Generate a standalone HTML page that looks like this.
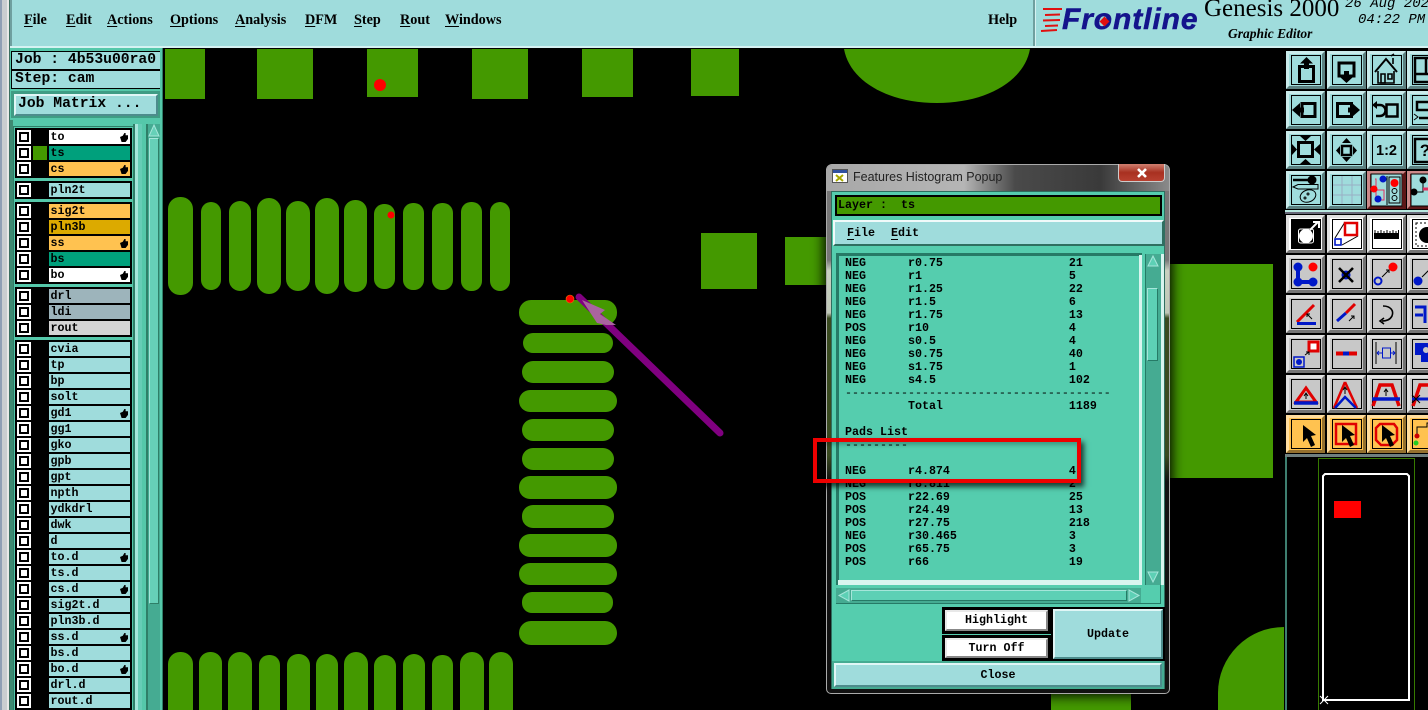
<!DOCTYPE html>
<html><head><meta charset="utf-8"><style>
html,body{margin:0;padding:0;background:#000;width:1428px;height:710px;overflow:hidden}
div,pre,b,i,u,span{position:absolute;margin:0;box-sizing:border-box}
body{font-family:"Liberation Mono",monospace;font-weight:bold;color:#000;font-size:11.67px}
.m{font:bold 14.2px "Liberation Serif",serif;top:12px;line-height:16px;white-space:pre}
.m s{text-decoration:underline;text-underline-offset:2px}
.bev{background:#9fdcdc;border:2px solid;border-color:#e0f6f6 #4d8c8c #4d8c8c #e0f6f6}
.g{background:#000;left:15px;width:117px}
.r{left:15px;width:117px;height:14px}
.r i{left:2px;top:0;width:14px;height:14px;background:#fff}
.r i:after{content:"";position:absolute;left:2px;top:2px;width:10px;height:10px;border:2px solid #000;box-sizing:border-box}
.r b{left:34px;top:0;width:81px;height:14px;background:#9fdcdc;line-height:14px;padding-left:1.5px;white-space:pre;font-size:11.67px}
.r u{right:2px;top:3px;width:8px;height:9px;background:#000;clip-path:polygon(0 45%,35% 30%,55% 0,70% 0,70% 25%,100% 25%,100% 65%,70% 100%,20% 100%)}
.t{white-space:pre;line-height:13px}
.btn{text-align:center;white-space:pre}
</style></head><body>

<!-- left edge -->
<div style="left:0;top:0;width:2px;height:710px;background:#8f9fb5"></div>
<div style="left:2px;top:0;width:5px;height:710px;background:#c9cdd0"></div>
<div style="left:7px;top:0;width:2px;height:710px;background:#e8e8e8"></div>
<div style="left:9px;top:0;width:1px;height:710px;background:#3c6f60"></div>

<!-- top bar -->
<div style="left:10px;top:0;width:1418px;height:48px;background:#9fdcdc;border-bottom:2px solid #d5f2f2"></div>
<div style="left:10px;top:0;width:2px;height:46px;background:#6f9f9f"></div>
<div style="left:1033px;top:0;width:3px;height:46px;background:#6f9f9f;border-right:1px solid #d5f2f2"></div>
<div class="m" style="left:24px"><s>F</s>ile</div>
<div class="m" style="left:66px"><s>E</s>dit</div>
<div class="m" style="left:107px"><s>A</s>ctions</div>
<div class="m" style="left:170px"><s>O</s>ptions</div>
<div class="m" style="left:235px"><s>A</s>nalysis</div>
<div class="m" style="left:305px"><s>D</s>FM</div>
<div class="m" style="left:354px"><s>S</s>tep</div>
<div class="m" style="left:400px"><s>R</s>out</div>
<div class="m" style="left:445px"><s>W</s>indows</div>
<div class="m" style="left:988px">Help</div>

<!-- logo -->
<svg style="position:absolute;left:1040px;top:6px" width="24" height="26"><g stroke="#e01010" stroke-width="2"><path d="M3 3L22 3M5 9L20 8.500M3 14.500L20 14M5 20L18 19.500M1 25L17 24"/></g></svg>
<div style="left:1062px;top:2px;font:italic bold 30px/36px 'Liberation Sans',sans-serif;color:#14148c;white-space:pre;letter-spacing:.9px;-webkit-text-stroke:.5px #14148c">Frontline</div>
<div style="left:1100.500px;top:18px;width:7px;height:7px;background:#e01010;transform:rotate(45deg)"></div>
<div style="left:1204px;top:-6px;font:25px/30px 'Liberation Serif',serif;white-space:pre">Genesis 2000</div>
<div style="left:1228px;top:26px;font:italic bold 13.5px/16px 'Liberation Serif',serif;white-space:pre">Graphic Editor</div>
<div style="left:1345px;top:-3px;font:italic 14px/14px 'Liberation Mono',monospace;white-space:pre">26 Aug 2021</div>
<div style="left:1358px;top:13px;font:italic 14px/14px 'Liberation Mono',monospace;white-space:pre">04:22 PM</div>

<!-- left panel -->
<div style="left:10px;top:48px;width:153px;height:662px;background:#55c8aa"></div>
<div style="left:10px;top:120px;width:3px;height:590px;background:#3f8a72"></div>
<div style="left:11px;top:51px;width:150px;height:20px;background:#9fdcdc;border:1px solid #000;border-width:1px 1px 2px;font-size:14.7px;line-height:17px;padding-left:3px;white-space:pre">Job : 4b53u00ra0</div>
<div style="left:11px;top:70px;width:150px;height:19px;background:#9fdcdc;border:1px solid #000;font-size:14.7px;line-height:17px;padding-left:3px;white-space:pre">Step: cam</div>
<div style="left:11px;top:91px;width:150px;height:27px;background:#3f9c84"></div>
<div class="bev" style="left:14px;top:94px;width:144px;height:22px;border-width:2px;font-size:14.7px;line-height:17px;padding-left:2px;white-space:pre">Job Matrix ...</div>

<!-- scroll strips -->
<div style="left:133px;top:124px;width:2px;height:586px;background:#2f7f68"></div>
<div style="left:135px;top:124px;width:3px;height:586px;background:#a5e6da"></div>
<div style="left:138px;top:124px;width:4px;height:586px;background:#66cdb6"></div>
<div style="left:146px;top:124px;width:2px;height:586px;background:#2f7f68"></div>
<div style="left:148px;top:124px;width:12px;height:586px;background:#45ab92"></div>
<div style="left:149px;top:138px;width:10px;height:466px;background:#66d0b8;border:1px solid;border-color:#a5e6da #2f7f68 #2f7f68 #a5e6da"></div>
<svg style="position:absolute;left:148px;top:124px" width="12" height="14"><path d="M6 1L11 12H1Z" fill="#66d0b8" stroke="#a5e6da"/></svg>
<div style="left:160px;top:48px;width:3px;height:662px;background:#55c8aa;border-right:1px solid #2f7f68"></div>

<div style="left:13px;top:126px;width:121px;height:584px;background:#55c8aa;border:1px solid #2f7f68;border-bottom:0"></div>
<div class="g" style="top:128px;height:50px"></div>
<div class="g" style="top:181px;height:18px"></div>
<div class="g" style="top:202px;height:82px"></div>
<div class="g" style="top:287px;height:50px"></div>
<div class="g" style="top:340px;height:370px"></div>
<div style="left:33px;top:146px;width:14px;height:14px;background:#449900;z-index:2"></div>

<div class="r" style="top:130px"><i></i><b style="background:#fff">to<u></u></b></div>
<div class="r" style="top:146px"><i></i><b style="background:#00a07c">ts</b></div>
<div class="r" style="top:162px"><i></i><b style="background:#ffc250">cs<u></u></b></div>
<div class="r" style="top:183px"><i></i><b>pln2t</b></div>
<div class="r" style="top:204px"><i></i><b style="background:#ffc250">sig2t</b></div>
<div class="r" style="top:220px"><i></i><b style="background:#dcaa00">pln3b</b></div>
<div class="r" style="top:236px"><i></i><b style="background:#ffc250">ss<u></u></b></div>
<div class="r" style="top:252px"><i></i><b style="background:#00a07c">bs</b></div>
<div class="r" style="top:268px"><i></i><b style="background:#fff">bo<u></u></b></div>
<div class="r" style="top:289px"><i></i><b style="background:#9db4bb">drl</b></div>
<div class="r" style="top:305px"><i></i><b style="background:#9db4bb">ldi</b></div>
<div class="r" style="top:321px"><i></i><b style="background:#d4d4d4">rout</b></div>
<div class="r" style="top:342px"><i></i><b>cvia</b></div>
<div class="r" style="top:358px"><i></i><b>tp</b></div>
<div class="r" style="top:374px"><i></i><b>bp</b></div>
<div class="r" style="top:390px"><i></i><b>solt</b></div>
<div class="r" style="top:406px"><i></i><b>gd1<u></u></b></div>
<div class="r" style="top:422px"><i></i><b>gg1</b></div>
<div class="r" style="top:438px"><i></i><b>gko</b></div>
<div class="r" style="top:454px"><i></i><b>gpb</b></div>
<div class="r" style="top:470px"><i></i><b>gpt</b></div>
<div class="r" style="top:486px"><i></i><b>npth</b></div>
<div class="r" style="top:502px"><i></i><b>ydkdrl</b></div>
<div class="r" style="top:518px"><i></i><b>dwk</b></div>
<div class="r" style="top:534px"><i></i><b>d</b></div>
<div class="r" style="top:550px"><i></i><b>to.d<u></u></b></div>
<div class="r" style="top:566px"><i></i><b>ts.d</b></div>
<div class="r" style="top:582px"><i></i><b>cs.d<u></u></b></div>
<div class="r" style="top:598px"><i></i><b>sig2t.d</b></div>
<div class="r" style="top:614px"><i></i><b>pln3b.d</b></div>
<div class="r" style="top:630px"><i></i><b>ss.d<u></u></b></div>
<div class="r" style="top:646px"><i></i><b>bs.d</b></div>
<div class="r" style="top:662px"><i></i><b>bo.d<u></u></b></div>
<div class="r" style="top:678px"><i></i><b>drl.d</b></div>
<div class="r" style="top:694px"><i></i><b>rout.d</b></div>

<!-- canvas -->
<svg style="position:absolute;left:0;top:0" width="1428" height="710">
<g fill="#449900">
<rect x="165" y="49" width="40" height="50"/><rect x="257" y="49" width="56" height="50"/><rect x="367" y="49" width="51" height="48"/><rect x="472" y="49" width="56" height="50"/><rect x="582" y="49" width="51" height="48"/><rect x="691" y="49" width="48" height="47"/>
<path d="M844 49H1030C1024 82 985 103 937 103C889 103 850 82 844 49Z"/>
<rect x="168" y="197" width="25" height="98" rx="12"/><rect x="201" y="202" width="20" height="88" rx="10"/><rect x="229" y="201" width="22" height="90" rx="11"/><rect x="257" y="198" width="24" height="96" rx="12"/><rect x="286" y="201" width="24" height="90" rx="12"/><rect x="315" y="198" width="24" height="96" rx="12"/><rect x="344" y="200" width="23" height="92" rx="11"/><rect x="374" y="204" width="21" height="85" rx="10"/><rect x="403" y="203" width="21" height="87" rx="10"/><rect x="432" y="203" width="21" height="87" rx="10"/><rect x="461" y="202" width="21" height="89" rx="10"/><rect x="490" y="202" width="20" height="89" rx="10"/>
<rect x="168" y="652" width="25" height="90" rx="12"/><rect x="199" y="652" width="23" height="90" rx="11"/><rect x="228" y="652" width="24" height="90" rx="12"/><rect x="259" y="655" width="21" height="90" rx="10"/><rect x="287" y="654" width="23" height="90" rx="11"/><rect x="316" y="654" width="22" height="90" rx="11"/><rect x="344" y="652" width="24" height="90" rx="12"/><rect x="374" y="655" width="22" height="90" rx="11"/><rect x="403" y="654" width="22" height="90" rx="11"/><rect x="432" y="655" width="21" height="90" rx="10"/><rect x="460" y="652" width="24" height="90" rx="12"/><rect x="489" y="652" width="24" height="90" rx="12"/>
<rect x="519" y="300" width="98" height="25" rx="12"/><rect x="523" y="333" width="90" height="20" rx="10"/><rect x="522" y="361" width="92" height="22" rx="11"/><rect x="519" y="390" width="98" height="22" rx="11"/><rect x="522" y="419" width="92" height="22" rx="11"/><rect x="522" y="448" width="92" height="22" rx="11"/><rect x="519" y="476" width="98" height="23" rx="11"/><rect x="522" y="505" width="92" height="23" rx="11"/><rect x="519" y="534" width="98" height="23" rx="11"/><rect x="519" y="563" width="98" height="22" rx="11"/><rect x="522" y="592" width="91" height="21" rx="10"/><rect x="519" y="621" width="98" height="24" rx="12"/>
<rect x="701" y="233" width="56" height="56"/><rect x="785" y="237" width="60" height="48"/>
<rect x="1150" y="264" width="123" height="214"/><rect x="1051" y="680" width="80" height="30"/>
<path d="M1284 627A66 66 0 0 0 1218 693V710H1284Z"/>
</g>
<circle cx="380" cy="85" r="6" fill="#f00"/><circle cx="391" cy="215" r="3.500" fill="#f00"/>
<path d="M579 297L720 433" stroke="#800080" stroke-width="7" stroke-linecap="round"/>
<path d="M582 300L605 310L600 314L616 325H606L597 323Z" fill="#a9649f"/>
<circle cx="570" cy="299" r="4" fill="#f00" stroke="#e08000" stroke-width=".6"/>
</svg>

<!-- right toolbar -->
<svg style="position:absolute;left:1283px;top:47px" width="145" height="663" viewBox="1283 47 145 663">
<defs>
<g id="b"><rect width="39" height="38"/><path d="M0 0H39L36 3H3V35L0 38Z" fill="#fff" fill-opacity=".45"/><path d="M39 0V38H0L3 35H36V3Z" fill="#000" fill-opacity=".42"/></g>
<path id="f" d="M5.500 4.500h29v29h-29z" fill="none" stroke="#000"/>
<path id="cur" d="M0 0V17L4 13L8 22L12 20L8 11L13 10Z" fill="#000"/>
</defs>
<rect x="1283" y="48" width="145" height="409" fill="#000"/>
<rect x="1285" y="210" width="143" height="2" fill="#b8e8e0"/><rect x="1285" y="212" width="143" height="2" fill="#667"/>
<rect x="1285" y="454" width="143" height="3" fill="#6f7f7f"/>

<!-- row 1 -->
<g fill="#9fdcdc">
<use href="#b" x="1286" y="51"/><use href="#b" x="1327" y="51"/><use href="#b" x="1367" y="51"/><use href="#b" x="1407" y="51"/>
<use href="#b" x="1286" y="91"/><use href="#b" x="1327" y="91"/><use href="#b" x="1367" y="91"/><use href="#b" x="1407" y="91"/>
<use href="#b" x="1286" y="131"/><use href="#b" x="1327" y="131"/><use href="#b" x="1367" y="131"/><use href="#b" x="1407" y="131"/>
<use href="#b" x="1286" y="171"/><use href="#b" x="1327" y="171"/>
</g>
<g fill="#a02828"><use href="#b" x="1367" y="171"/><use href="#b" x="1407" y="171"/></g>
<g fill="#c8c8c8">
<use href="#b" x="1286" y="215"/><use href="#b" x="1327" y="215"/><use href="#b" x="1367" y="215"/><use href="#b" x="1407" y="215"/>
<use href="#b" x="1286" y="255"/><use href="#b" x="1327" y="255"/><use href="#b" x="1367" y="255"/><use href="#b" x="1407" y="255"/>
<use href="#b" x="1286" y="295"/><use href="#b" x="1327" y="295"/><use href="#b" x="1367" y="295"/><use href="#b" x="1407" y="295"/>
<use href="#b" x="1286" y="335"/><use href="#b" x="1327" y="335"/><use href="#b" x="1367" y="335"/><use href="#b" x="1407" y="335"/>
<use href="#b" x="1286" y="375"/><use href="#b" x="1327" y="375"/><use href="#b" x="1367" y="375"/><use href="#b" x="1407" y="375"/>
</g>
<g fill="#ffc250"><use href="#b" x="1286" y="415"/><use href="#b" x="1327" y="415"/><use href="#b" x="1367" y="415"/><use href="#b" x="1407" y="415"/></g>

<!-- frames -->
<g>
<use href="#f" x="1286" y="51"/><use href="#f" x="1327" y="51"/><use href="#f" x="1367" y="51"/><use href="#f" x="1407" y="51"/>
<use href="#f" x="1286" y="91"/><use href="#f" x="1327" y="91"/><use href="#f" x="1367" y="91"/><use href="#f" x="1407" y="91"/>
<use href="#f" x="1286" y="131"/><use href="#f" x="1327" y="131"/><use href="#f" x="1367" y="131"/><use href="#f" x="1407" y="131"/>
<use href="#f" x="1286" y="171"/><use href="#f" x="1327" y="171"/>
<use href="#f" x="1286" y="255"/><use href="#f" x="1327" y="255"/><use href="#f" x="1367" y="255"/><use href="#f" x="1407" y="255"/>
<use href="#f" x="1286" y="295"/><use href="#f" x="1327" y="295"/><use href="#f" x="1367" y="295"/><use href="#f" x="1407" y="295"/>
<use href="#f" x="1286" y="335"/><use href="#f" x="1327" y="335"/><use href="#f" x="1367" y="335"/><use href="#f" x="1407" y="335"/>
<use href="#f" x="1286" y="375"/><use href="#f" x="1327" y="375"/><use href="#f" x="1367" y="375"/><use href="#f" x="1407" y="375"/>
<use href="#f" x="1286" y="415"/><use href="#f" x="1327" y="415"/><use href="#f" x="1367" y="415"/><use href="#f" x="1407" y="415"/>
</g>

<!-- r1 icons -->
<g transform="translate(1286,51)" fill="none" stroke="#000" stroke-width="3"><path d="M13.500 15.500h14v15h-14z"/><path d="M20.500 6L14 12.500H18V18H23V12.500H27Z" fill="#000" stroke="none"/></g>
<g transform="translate(1327,51)" fill="none" stroke="#000" stroke-width="3"><path d="M12 12h15v13H12z"/><path d="M19.500 32L13 26H17V20H22V26H26Z" fill="#000" stroke="none"/></g>
<g transform="translate(1367,51)" fill="none" stroke="#000" stroke-width="1.600"><path d="M8 21L19 8L30 21" stroke-width="2"/><path d="M11 20V32H27V20"/><path d="M14 23h4v9h-4zM21 23h4v5h-4z"/><path d="M26 13V7M24 5l3-2"/></g>
<g transform="translate(1407,51)" fill="none" stroke="#000" stroke-width="2.500"><path d="M8 7h24v24H8zM8 23h24M19 7v16"/></g>
<!-- r2 -->
<g transform="translate(1286,91)" fill="none" stroke="#000" stroke-width="3"><path d="M16 12.500h13v13H16z"/><path d="M6 19L14 12V26Z" fill="#000" stroke="none"/><path d="M12 16.500h6v5h-6z" fill="#000" stroke="none"/></g>
<g transform="translate(1327,91)" fill="none" stroke="#000" stroke-width="3"><path d="M10.500 12.500h14v13h-14z"/><path d="M33 19L25 12V26Z" fill="#000" stroke="none"/><path d="M21 16.500h6v5h-6z" fill="#000" stroke="none"/></g>
<g transform="translate(1367,91)" fill="none" stroke="#000" stroke-width="2.500"><path d="M19.500 13.500h11v12h-11z"/><path d="M9 14h4a5 5 0 0 1 0 11h-4"/><path d="M5 14L10 10V18Z" fill="#000" stroke="none"/></g>
<g transform="translate(1407,91)" fill="none" stroke="#000" stroke-width="2.500"><path d="M32 11H10V19H28V27H12"/><path d="M7 23l4 3-4 3" stroke-width="1"/></g>
<!-- r3 -->
<g transform="translate(1286,131)" fill="none" stroke="#000" stroke-width="3"><path d="M12.500 11.500h14v14h-14z"/><g fill="#000" stroke="none"><path d="M14 5H25L19.500 10ZM14 33H25L19.500 28ZM6 13V24L11 18.500ZM34 13V24L28 18.500Z"/></g></g>
<g transform="translate(1327,131)" fill="none" stroke="#000" stroke-width="2.500"><path d="M15 15h9v9h-9z"/><g fill="#000" stroke="none"><path d="M19.500 7L15 12H24ZM19.500 31L15 26H24ZM9 19.500L13 15V24ZM30 19.500L26 15V24Z"/></g></g>
<text x="1386.500" y="155" font-family="Liberation Sans,sans-serif" font-weight="bold" font-size="14.500" text-anchor="middle">1:2</text>
<g transform="translate(1407,131)" fill="none" stroke="#000" stroke-width="2.500"><path d="M8 8h24v23H8z"/></g>
<text x="1425" y="156" font-family="Liberation Sans,sans-serif" font-weight="bold" font-size="17" text-anchor="middle">?</text>
<!-- r4 -->
<g transform="translate(1286,171)" fill="none" stroke="#000"><path d="M7 9H24" stroke-width="2.500"/><circle cx="26" cy="9" r="4" fill="#000"/><path d="M7 16L12 13.500H32V18H12Z" fill="#9fdcdc" stroke-width="1"/><ellipse cx="22" cy="25" rx="8" ry="6" transform="rotate(-20 22 25)" fill="#9fdcdc"/><circle cx="19" cy="27" r="1"/><circle cx="22" cy="23" r="1"/></g>
<g transform="translate(1327,171)" stroke="#9aaec4" stroke-width="1" fill="none"><path d="M15 5v28M25 5v28M6 14h28M6 24h28"/></g>
<g transform="translate(1367,171)"><rect x="4" y="3" width="31" height="32" fill="#9fdcdc" stroke="#000"/><path d="M20 5V34" stroke="#000"/><path d="M8 8H9V31M8 19H17V29H12" fill="none" stroke="#e03060" stroke-width="1"/><circle cx="16" cy="8" r="3.500" fill="#0018c8"/><circle cx="7" cy="18" r="3.500" fill="#f00"/><circle cx="11" cy="28" r="3.500" fill="#0018c8"/><rect x="22" y="6" width="11" height="26" fill="none" stroke="#000"/><circle cx="27.500" cy="12" r="4" fill="#f00"/><circle cx="27.500" cy="20" r="2.500" fill="none" stroke="#000"/><circle cx="27.500" cy="27" r="2.500" fill="none" stroke="#000"/></g>
<g transform="translate(1407,171)"><rect x="4" y="3" width="31" height="32" fill="#9fdcdc" stroke="#000"/><circle cx="16" cy="9" r="3.500" fill="#000"/><circle cx="7" cy="21" r="3.500" fill="#000"/><path d="M16 9V21H7" fill="none" stroke="#000"/><path d="M16 18H22" stroke="#e03060" stroke-width="3"/></g>

<!-- white row -->
<g transform="translate(1286,215)"><rect x="3" y="3" width="33" height="32" fill="#fff"/><rect x="5" y="4" width="30" height="30" fill="#000"/><rect x="12.500" y="14" width="15" height="14" rx="2" fill="none" stroke="#fff"/><circle cx="20" cy="21" r="7" fill="#fff"/><path d="M24 15L32 7M27 7H33V13" fill="none" stroke="#fff" stroke-width="2"/></g>
<g transform="translate(1327,215)"><rect x="3" y="3" width="33" height="32" fill="#fff"/><rect x="5.500" y="4.500" width="29" height="29" fill="none" stroke="#000"/><path d="M8 23L18 7M15 30L31 21" stroke="#000" fill="none"/><rect x="18" y="8" width="12" height="12" fill="#fff" stroke="#e00000" stroke-width="2.500"/><rect x="8" y="24" width="6" height="6" fill="#fff" stroke="#0018c8" stroke-width="1.600"/></g>
<g transform="translate(1367,215)"><rect x="3" y="3" width="33" height="32" fill="#fff"/><rect x="5.500" y="4.500" width="29" height="29" fill="none" stroke="#000"/><rect x="7" y="18" width="25" height="6" fill="#000"/><path d="M8 15v4M11 16v3M14 15v4M17 16v3M20 15v4M23 16v3M26 15v4M29 16v3M31.500 15v4" stroke="#000"/></g>
<g transform="translate(1407,215)"><rect x="3" y="3" width="33" height="32" fill="#fff"/><rect x="5.500" y="4.500" width="29" height="29" fill="none" stroke="#000"/><rect x="9" y="8" width="24" height="23" fill="none" stroke="#000" stroke-dasharray="2 2"/><circle cx="20" cy="20" r="8" fill="#000"/></g>
<!-- grey 2 -->
<g transform="translate(1286,255)"><path d="M12 12V27H27" fill="none" stroke="#0018c8" stroke-width="4"/><circle cx="12" cy="12" r="4.500" fill="#0018c8"/><circle cx="12" cy="27" r="4.500" fill="#0018c8"/><circle cx="27" cy="27" r="4.500" fill="#0018c8"/><circle cx="27" cy="12" r="4.500" fill="#f00"/></g>
<g transform="translate(1327,255)"><circle cx="19" cy="20" r="4.500" fill="#0018c8"/><path d="M12 13L26 27M26 13L12 27" stroke="#000" stroke-width="2.500"/></g>
<g transform="translate(1367,255)"><circle cx="11" cy="26" r="3.500" fill="none" stroke="#0018c8" stroke-width="2"/><circle cx="26" cy="12" r="4.500" fill="#f00"/><path d="M15 22L22 15M19 15h3v3" fill="none" stroke="#000"/></g>
<g transform="translate(1407,255)"><circle cx="11" cy="26" r="4.500" fill="#0018c8"/><path d="M15 22L24 13" stroke="#000"/></g>
<!-- grey 3 -->
<g transform="translate(1286,295)"><path d="M11 27L28 10" stroke="#e00000" stroke-width="3"/><path d="M11 28.500H30" stroke="#0018c8" stroke-width="3"/><path d="M26 24L21 19M21 22V19H24" fill="none" stroke="#000"/></g>
<g transform="translate(1327,295)"><path d="M10 26L19 18" stroke="#0018c8" stroke-width="3"/><path d="M19 18L28 9" stroke="#e00000" stroke-width="3"/><path d="M22 26L27 21M24 21H27V24" fill="none" stroke="#000"/></g>
<g transform="translate(1367,295)" fill="none" stroke="#000" stroke-width="1.600"><path d="M16 11C24 11 27 16 25 21C23 25 19 26 15 26"/><path d="M17 23L13 26L17 29"/></g>
<g transform="translate(1407,295)" fill="none"><path d="M8 12H18V28M8 20H16" stroke="#0018c8" stroke-width="3"/><path d="M22 8V30" stroke="#000"/></g>
<!-- grey 4 -->
<g transform="translate(1286,335)"><rect x="23" y="7" width="9" height="9" fill="#fff" stroke="#e00000" stroke-width="3"/><rect x="8" y="22" width="10" height="10" fill="none" stroke="#0018c8" stroke-width="1.500"/><circle cx="13" cy="27" r="3" fill="#0018c8"/><path d="M19 20L23 17M20 17H23V20" fill="none" stroke="#000"/></g>
<g transform="translate(1327,335)"><path d="M9 18.500H30" stroke="#e00000" stroke-width="4"/><path d="M16 18.500H22" stroke="#0018c8" stroke-width="4"/></g>
<g transform="translate(1367,335)" fill="none"><path d="M9 7V29M29 7V29" stroke="#000"/><rect x="15.500" y="13" width="8" height="10" stroke="#0018c8"/><path d="M10 18H15M24 18H28M10 18l2-2M10 18l2 2M28 18l-2-2M28 18l-2 2" stroke="#0018c8"/></g>
<g transform="translate(1407,335)"><path d="M8 8H22V16H24V27H14V20H8Z" fill="#0018c8"/><circle cx="19" cy="15" r="3" fill="#c8c8c8"/></g>
<!-- grey 5 -->
<g transform="translate(1286,375)" fill="none"><path d="M20 13L10 27H30Z" stroke="#e00000" stroke-width="3"/><path d="M8 28H32" stroke="#0018c8" stroke-width="3.500"/><path d="M20 24V19M18 21L20 18L22 21" stroke="#000"/></g>
<g transform="translate(1327,375)" fill="none"><path d="M18 7L7 33M18 7L30 33" stroke="#e00000" stroke-width="2.500"/><path d="M8 33L18 22L29 33" stroke="#0018c8" stroke-width="2.500"/><path d="M18 19V13M16 15L18 12L20 15" stroke="#000"/></g>
<g transform="translate(1367,375)" fill="none"><path d="M6 31L13 10H25L32 31" stroke="#e00000" stroke-width="3.500"/><path d="M5 24H33" stroke="#0018c8" stroke-width="3.500"/><path d="M19 21V15M17 17L19 14L21 17" stroke="#000"/></g>
<g transform="translate(1407,375)" fill="none"><path d="M6 31L13 10H24" stroke="#e00000" stroke-width="3.500"/><path d="M5 24H33" stroke="#0018c8" stroke-width="3"/><path d="M2 20L10 28M10 20L2 28" stroke="#000" transform="translate(3,0)"/></g>
<!-- orange -->
<use href="#cur" transform="translate(1303,425)"/>
<g transform="translate(1327,415)"><rect x="9" y="9" width="20" height="20" fill="none" stroke="#e00000" stroke-width="2.500"/><use href="#cur" transform="translate(15,10)"/></g>
<g transform="translate(1367,415)"><path d="M13 9H27L30 13V25L25 30H14L9 25V13Z" fill="none" stroke="#e00000" stroke-width="2.500"/><use href="#cur" transform="translate(15,10)"/></g>
<g transform="translate(1407,415)"><path d="M10 21V12H20V8H30" fill="none" stroke="#000"/><circle cx="10" cy="21" r="2.500" fill="#c00"/><circle cx="9" cy="28" r="2.500" fill="#2c2"/></g>

<!-- minimap -->
<rect x="1285" y="457" width="2" height="253" fill="#3e7f70"/>
<path d="M1318.500 710V458.500H1414.500V710" fill="none" stroke="#449900" stroke-opacity=".8"/>
<path d="M1323 700V476L1325 474H1407L1409 476V700Z" fill="none" stroke="#fff" stroke-width="2"/>
<rect x="1334" y="501" width="27" height="17" fill="#f00"/>
<path d="M1320 696L1328 704M1328 696L1320 704" stroke="#fff"/>
</svg>

<!-- popup -->
<div style="left:826px;top:164px;width:344px;height:530px;border-radius:6px 6px 5px 5px;background:linear-gradient(180deg,#777 0,#777 18%,#c8d0c0 20%,#c0c8b8 28%,#3a4a20 29%,#3a4a20 55%,#111 60%,#111 100%);border:1px solid #aaa;box-shadow:0 0 12px 2px #000"></div>
<div style="left:827px;top:165px;width:342px;height:26px;border-radius:5px 5px 0 0;background:linear-gradient(90deg,#a8a8a8 0,#b5b5b5 40%,#4a4a4a 55%,#3a3a3a 80%,#8a8a8a 100%)"></div>
<svg style="position:absolute;left:832px;top:169px" width="17" height="15"><rect x=".5" y=".5" width="15" height="13" fill="#fff" stroke="#555"/><rect x="1" y="1" width="14" height="3" fill="#3050a0"/><path d="M4 6L11 12M11 6L4 12" stroke="#a8a800" stroke-width="2"/></svg>
<div style="left:853px;top:169px;font:normal 12.500px/16px 'Liberation Sans',sans-serif;color:#222;white-space:pre">Features Histogram Popup</div>
<div style="left:1118px;top:164px;width:47px;height:18px;background:linear-gradient(180deg,#d08070 0,#a83020 50%,#b84030 100%);border:1px solid #ccc;border-top:0;border-radius:0 0 4px 4px"></div>
<svg style="position:absolute;left:1136px;top:168px" width="12" height="10"><path d="M2 1L10 9M10 1L2 9" stroke="#fff" stroke-width="2.600"/></svg>

<div style="left:831px;top:191px;width:334px;height:498px;background:#55cdae;border:1px solid #2f6f60"></div>
<div style="left:835px;top:195px;width:327px;height:21px;background:#449900;border:2px solid #000;line-height:16px;padding-left:1px;white-space:pre">Layer :  ts</div>
<div class="bev" style="left:833px;top:220px;width:331px;height:26px;border-color:#f0fafa #2f6f60 #2f6f60 #f0fafa"></div>
<div style="left:847px;top:226px;line-height:14px;white-space:pre"><span style="position:static;text-decoration:underline;text-decoration-skip-ink:none;text-underline-offset:3px">F</span>ile</div>
<div style="left:891px;top:226px;line-height:14px;white-space:pre"><span style="position:static;text-decoration:underline;text-decoration-skip-ink:none;text-underline-offset:3px">E</span>dit</div>

<!-- list -->
<div style="left:836px;top:253px;width:306px;height:332px;background:#d8f5ef;border:2px solid #267a66;border-width:2px 0 0 2px"></div>
<div style="left:838px;top:255px;width:301px;height:325px;background:#55cdae;border:1px solid #267a66;border-width:1px 0 0 1px"></div>
<pre class="t" style="left:845px;top:257px;font:bold 11.670px/13px 'Liberation Mono',monospace">NEG      r0.75                  21
NEG      r1                     5
NEG      r1.25                  22
NEG      r1.5                   6
NEG      r1.75                  13
POS      r10                    4
NEG      s0.5                   4
NEG      s0.75                  40
NEG      s1.75                  1
NEG      s4.5                   102
<span style="position:static;font-weight:normal">--------------------------------------</span>
         Total                  1189

Pads List
<span style="position:static;font-weight:normal">---------</span>

NEG      r4.874                 4
NEG      r8.811                 2
POS      r22.69                 25
POS      r24.49                 13
POS      r27.75                 218
NEG      r30.465                3
POS      r65.75                 3
POS      r66                    19</pre>

<!-- v scroll -->
<div style="left:1145px;top:254px;width:1px;height:331px;background:#267a66"></div>
<div style="left:1146px;top:254px;width:15px;height:331px;background:#45ab92"></div>
<div style="left:1147px;top:288px;width:11px;height:73px;background:#5dd0b5;border:1px solid;border-color:#a5e6da #267a66 #267a66 #a5e6da"></div>
<svg style="position:absolute;left:1146px;top:254px" width="14" height="14"><path d="M7 2L12 12H2Z" fill="#5dd0b5" stroke="#a5e6da"/></svg>
<svg style="position:absolute;left:1146px;top:570px" width="14" height="14"><path d="M7 12L12 2H2Z" fill="#5dd0b5" stroke="#a5e6da"/></svg>
<div style="left:1161px;top:254px;width:3px;height:331px;background:#d8f5ef"></div>
<!-- h scroll -->
<div style="left:836px;top:588px;width:305px;height:15px;background:#45ab92"></div>
<div style="left:851px;top:590px;width:276px;height:11px;background:#5dd0b5;border:1px solid;border-color:#a5e6da #267a66 #267a66 #a5e6da"></div>
<svg style="position:absolute;left:837px;top:589px" width="14" height="13"><path d="M2 6.500L12 1V12Z" fill="#5dd0b5" stroke="#a5e6da"/></svg>
<svg style="position:absolute;left:1127px;top:589px" width="14" height="13"><path d="M12 6.500L2 1V12Z" fill="#5dd0b5" stroke="#a5e6da"/></svg>
<div style="left:836px;top:603px;width:325px;height:1px;background:#267a66"></div>
<div style="left:1160px;top:585px;width:1px;height:19px;background:#267a66"></div>

<!-- buttons -->
<div style="left:942px;top:607px;width:109px;height:27px;background:#000"></div>
<div style="left:942px;top:635px;width:109px;height:26px;background:#000"></div>
<div style="left:832px;top:661px;width:332px;height:1px;background:#000"></div>
<div class="bev btn" style="left:945px;top:610px;width:103px;height:21px;background:#fff;border-color:#e8e8e8 #888 #888 #e8e8e8;line-height:17px">Highlight</div>
<div class="bev btn" style="left:945px;top:638px;width:103px;height:20px;background:#fff;border-color:#e8e8e8 #888 #888 #e8e8e8;line-height:16px">Turn Off</div>
<div style="left:1051px;top:607px;width:114px;height:54px;background:#000"></div>
<div class="bev btn" style="left:1053px;top:609px;width:110px;height:50px;line-height:46px">Update</div>
<div style="left:832px;top:661px;width:332px;height:28px;background:#45ab92"></div>
<div class="bev btn" style="left:834px;top:663px;width:328px;height:24px;line-height:20px">Close</div>

<!-- red annotation -->
<div style="left:813px;top:438px;width:268px;height:45px;border:4px solid #ee0000;box-shadow:3px 4px 5px rgba(0,0,0,.7),inset 2px 3px 4px rgba(0,0,0,.25)"></div>

</body></html>
